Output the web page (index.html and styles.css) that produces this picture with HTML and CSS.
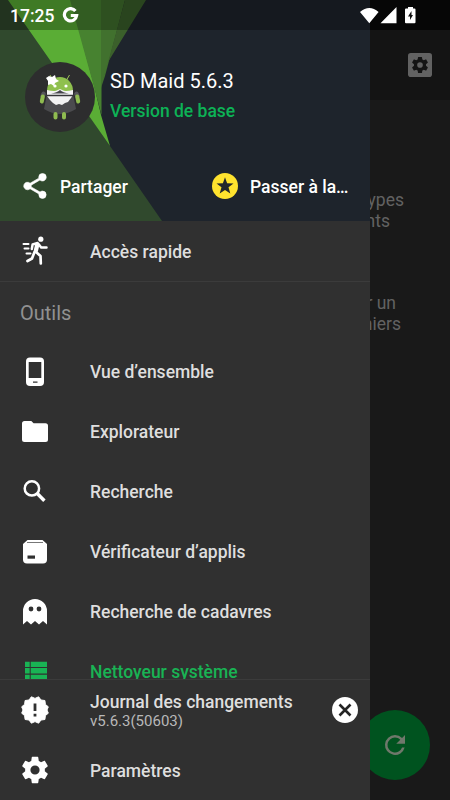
FILE: index.html
```html
<!DOCTYPE html>
<html lang="fr">
<head>
<meta charset="utf-8">
<title>SD Maid</title>
<link rel="stylesheet" href="styles.css">
</head>
<body>
<svg class="defs" width="0" height="0">
  <symbol id="gear" viewBox="0 0 24 24"><path d="M19.43 12.98c.04-.32.07-.64.07-.98s-.03-.66-.07-.98l2.11-1.65c.19-.15.24-.42.12-.64l-2-3.46c-.12-.22-.39-.3-.61-.22l-2.49 1c-.52-.4-1.08-.73-1.69-.98l-.38-2.65A.49.49 0 0 0 14 2h-4a.49.49 0 0 0-.49.42l-.38 2.65c-.61.25-1.17.59-1.69.98l-2.49-1a.49.49 0 0 0-.61.22l-2 3.46c-.13.22-.07.49.12.64l2.11 1.65c-.04.32-.07.65-.07.98s.03.66.07.98l-2.11 1.65c-.19.15-.24.42-.12.64l2 3.46c.12.22.39.3.61.22l2.49-1c.52.4 1.08.73 1.69.98l.38 2.65c.03.24.24.42.49.42h4c.25 0 .46-.18.49-.42l.38-2.65c.61-.25 1.17-.59 1.69-.98l2.49 1c.23.09.49 0 .61-.22l2-3.46c.12-.22.07-.49-.12-.64zM12 15.5a3.5 3.5 0 1 1 0-7 3.5 3.5 0 0 1 0 7z"/></symbol>
</svg>
<div class="screen">
  <main class="page">
    <div class="page-status"></div>
    <div class="toolbar">
      <svg class="toolbar-icon" viewBox="0 0 24 24"><rect width="24" height="24" rx="2.8" fill="#626262"/><use href="#gear" x="2.3" y="2.3" width="19.4" height="19.4" fill="#141414"/></svg>
    </div>
    <div class="hints">
      <p><span>types</span><span class="nts">éléments</span></p>
      <p><span class="un">sur un</span><span class="iers">fichiers</span></p>
    </div>
    <button class="fab" aria-label="Actualiser"><svg viewBox="0 0 24 24"><path fill="#6f786b" d="M17.65 6.35A7.96 7.96 0 0 0 12 4a8 8 0 1 0 7.73 10h-2.08A6 6 0 1 1 12 6c1.66 0 3.14.69 4.22 1.78L13 11h7V4z"/></svg></button>
  </main>

  <aside class="drawer">
    <header class="hero">
      <svg class="hero-art" viewBox="0 0 370 221" preserveAspectRatio="none">
        <rect width="370" height="221" fill="#1e242c"/>
        <path fill="#30492d" d="M0 0H10L110 146 162 221H0z"/>
        <path fill="#5aad35" d="M8 0H71L94 85 101 115 110 146z"/>
        <path fill="#478230" d="M70 0H101.500V115L93.500 85z"/>
        <path fill="#41712e" d="M101 0H125L105 76 101 88z"/>
        <path fill="#3b602b" d="M125 0H146L108 62 101 88z"/>
        <rect width="370" height="30" fill="#000" opacity=".29"/>
      </svg>
      <div class="identity">
        <svg class="avatar" viewBox="0 0 70 70">
          <circle cx="35" cy="35" r="35" fill="#2d2d2e"/>
          <path stroke="#9bc25a" stroke-width="1" d="M41.500 18l3-5M28 18l-3-5"/>
          <path fill="#8fc04e" d="M22 29a13 14 0 0 1 26 0v4H22z"/>
          <circle cx="30" cy="24" r="1.600" fill="#fff"/><circle cx="41" cy="24" r="1.600" fill="#fff"/>
          <path fill="#fff" d="M24 14l3 1 3-2 1 4 3 2-4 2-1 3-3-2-3 1v-4l-2-3z"/>
          <path fill="#4b4b4e" d="M22 32l26 0 3 15q-8 5-16 5t-16-5z"/>
          <path fill="#f2f2f2" d="M22 28q6 1.500 9 .8l4-1.800 4 1.800q3 .7 9-.8v5l-2 3-3 4-3 1-3 2-3-1-3 1-3-2-3-3-3-4z"/>
          <path fill="#45454a" d="M26 31.500q6-1 9-3.500 3 2.500 9 3.500z"/>
          <path stroke="#353538" stroke-width="1.500" d="M21 33.500h28"/>
          <path stroke="#55555a" stroke-width="4.600" stroke-linecap="round" d="M18.500 32l-.8 2M51.500 32l.8 2"/>
          <g stroke="#8fbb50" stroke-width="4" stroke-linecap="round"><path d="M17.800 34.500l-1 5M52.200 34.500l1 5M30.500 52v3.500M39 52v3.500"/></g>
        </svg>
        <div class="names">
          <h1>SD Maid 5.6.3</h1>
          <p>Version de base</p>
        </div>
      </div>
      <div class="actions">
        <a class="action share"><svg viewBox="0 0 24 24" fill="#fff"><path stroke="#fff" stroke-width=".5" d="M18 16.080c-.76 0-1.440.3-1.960.77L8.910 12.700c.05-.23.09-.46.09-.7s-.04-.47-.09-.7l7.050-4.110A2.990 2.990 0 0 0 21 5a3 3 0 1 0-6 0c0 .24.04.47.09.7L8.040 9.810A3 3 0 1 0 6 15c.79 0 1.500-.31 2.040-.81l7.120 4.160c-.05.21-.08.43-.08.65a2.920 2.920 0 1 0 2.920-2.920z"/></svg><span>Partager</span></a>
        <a class="action upgrade"><svg viewBox="0 0 30 30"><circle cx="15" cy="15" r="13" fill="#ffe32e"/><path fill="#22272b" d="M15 6.200l2.100 6 6.400.2-5 3.900 1.800 6.100-5.300-3.500-5.300 3.500 1.800-6.100-5-3.900 6.400-.2z"/></svg><span>Passer à la…</span></a>
      </div>
    </header>

    <nav class="menu">
      <a class="item quick"><svg viewBox="0 0 30 30"><g fill="none" stroke="#fff" stroke-linecap="round" stroke-linejoin="round"><path stroke-width="2" d="M3.500 8h5M4.500 12.500h4M6.500 17.500h4"/><path stroke-width="2.500" d="M11.800 13l.8-4.500 5-1.500"/><path stroke-width="4.300" d="M17.200 9l-1.300 5.500"/><path stroke-width="2.500" d="M18.500 8l2.700 3.600H26.500"/><path stroke-width="2.700" d="M14.500 16l-2.500 6.500-4.500 2.500M16 16l4.500 4 .3 7.500"/></g><circle cx="20.800" cy="3.200" r="2.600" fill="#fff"/></svg><span>Accès rapide</span></a>
      <h2>Outils</h2>
      <a class="item"><svg viewBox="0 0 30 30"><rect x="6" y=".4" width="18" height="28.500" rx="4" fill="#fff"/><path fill="#303030" d="M8.700 5h12.600v16H8.700zM13 24.500h4.500v1.300H13z"/></svg><span>Vue d’ensemble</span></a>
      <a class="item"><svg viewBox="0 0 30 30"><path fill="#fff" d="M4.500 4h6.800l2.300 2.300h11.900a2.500 2.500 0 0 1 2.500 2.500v13.700a2.500 2.500 0 0 1-2.500 2.500h-21A2.500 2.500 0 0 1 2 22.500v-16A2.500 2.500 0 0 1 4.500 4z"/></svg><span>Explorateur</span></a>
      <a class="item"><svg viewBox="0 0 30 30"><g fill="none" stroke="#fff"><circle cx="11.900" cy="11.400" r="7.200" stroke-width="2.500"/><path stroke-width="3.400" d="M17 16.300l7.400 7.400"/></g></svg><span>Recherche</span></a>
      <a class="item"><svg viewBox="0 0 30 30"><path fill="#fff" d="M7.500 3h15l4.500 4v15.500a4 4 0 0 1-4 4H7a4 4 0 0 1-4-4V7z"/><path fill="#777" d="M7 5h16v1H7z"/><path fill="#303030" d="M7.500 18.500h7.500v3.200h-7.500z"/></svg><span>Vérificateur d’applis</span></a>
      <a class="item"><svg viewBox="0 0 30 30"><path fill="#fff" d="M3 14a12 12 0 0 1 24 0v13.500l-4-3.500-4 3.500-4-3.500-4 3.500L7 24l-4 3.500z"/><g fill="#303030"><circle cx="11" cy="12" r="2.400"/><circle cx="19" cy="12" r="2.400"/></g></svg><span>Recherche de cadavres</span></a>
      <a class="item active"><svg viewBox="0 0 30 30" fill="#19b354"><path d="M5 4.800h4.700v5.200H5zM10.700 4.800H27v5.200H10.700zM5 11h4.700v5.500H5zM10.700 11H27v5.500H10.700zM5 17.800h4.700v5.500H5zM10.700 17.800H27v5.500H10.700z"/></svg><span>Nettoyeur système</span></a>
    </nav>

    <footer class="bottom">
      <a class="item log">
        <svg viewBox="0 0 30 30"><path fill="#fff" stroke="#fff" stroke-linejoin="round" d="M15 3.400l3.600-1.600 2.400 3.200 3.900.5.500 3.900L28.300 11.800 27 15l1.300 3.200-2.900 2.400-.5 3.900-3.900.5-2.400 3.200L15 26.600l-3.600 1.600L9 25l-3.900-.5-.5-3.900-2.900-2.400L3 15l-1.300-3.200 2.900-2.400.5-3.900L9 5l2.400-3.200z"/><path fill="#303030" d="M13.600 8.500h2.800v7.500h-2.800zM13.600 18.700h2.800v2.800h-2.800z"/></svg>
        <span class="log-text">Journal des changements<small>v5.6.3(50603)</small></span>
        <svg class="close" viewBox="0 0 30 30"><circle cx="15" cy="15" r="13" fill="#fff"/><path stroke="#242424" stroke-width="2.600" d="M9.500 9.500l11 11M20.500 9.500l-11 11"/></svg>
      </a>
      <a class="item settings"><svg viewBox="0 0 30 30"><use href="#gear" x="-.8" y="-.8" width="31.600" height="31.600" fill="#fff"/></svg><span>Paramètres</span></a>
    </footer>
  </aside>

  <div class="status">
    <span>17:25</span>
    <svg class="google" viewBox="0 0 18 18"><path fill="none" stroke="#fff" stroke-width="3.400" d="M14.200 4.200A6.500 6.500 0 1 0 15.500 9H9.300"/></svg>
    <svg class="signals" viewBox="0 0 58 20"><g fill="#fff"><path d="M1 6Q10.300-2 19.600 6L10.300 17.300zM21.500 17.300L37.500 1v16.300zM47 2.500h2V1h5v1.500h1.500q1 0 1 1v12.800q0 1-1 1h-8.500q-1 0-1-1V3.500q0-1 1-1z"/></g><path fill="#111" d="M52.500 5L49 10.500h2v3.500l3-5h-1.500z"/></svg>
  </div>
</div>
</body>
</html>
```

FILE: styles.css
```css
* { box-sizing: border-box; }
body, h1, h2, p { margin: 0; }
body { font-family: Roboto, "Noto Sans", sans-serif; }
svg { display: block; flex: none; }
.defs { position: absolute; }

.screen { position: relative; width: 450px; height: 800px; overflow: hidden; background: #191919; }

.page { height: 100%; display: flex; flex-direction: column; }
.page-status { height: 30px; background: #060606; }
.toolbar { height: 70px; background: #141414; display: flex; align-items: center; justify-content: flex-end; padding-right: 18px; }
.toolbar-icon { width: 24px; height: 24px; }
.hints { padding-top: 90px; color: #626262; font-size: 17.5px; line-height: 21px; text-align: right; }
.hints p { display: flex; flex-direction: column; padding-right: 46px; margin-bottom: 61px; }
.nts { margin-right: 14px; }
.un { margin-right: 8px; }
.iers { margin-right: 3px; }
.fab { margin: auto 20px 20px auto; width: 70px; height: 70px; border: 0; border-radius: 50%; background: #00531f; padding: 20px; }
.fab svg { width: 30px; height: 30px; }

.drawer { position: absolute; left: 0; top: 0; width: 370px; height: 800px; background: #303030; display: flex; flex-direction: column; }

.hero { position: relative; height: 221px; flex: none; }
.hero-art { position: absolute; inset: 0; width: 100%; height: 100%; }
.identity { position: relative; display: flex; padding: 61.5px 0 0 25px; gap: 15px; }
.avatar { width: 70px; height: 70px; }
.names { padding-top: 6px; }
h1 { font-weight: 400; font-size: 20px; line-height: 26px; color: #fff; }
.names p { margin-top: 5px; font-weight: 500; font-size: 17.5px; line-height: 24px; color: #0db256; }
.actions { position: relative; display: flex; padding: 40px 0 0 20px; }
.action { display: flex; align-items: center; gap: 10px; height: 30px; font-weight: 500; font-size: 17.5px; color: #fff; }
.share { width: 190px; }
.action svg { width: 30px; height: 30px; margin-top: -1px; }

.menu { flex: 1; min-height: 0; overflow: hidden; }
.item { display: flex; align-items: center; gap: 40px; height: 60px; padding: 0 10px 0 20px; font-weight: 500; font-size: 17.5px; color: #dedede; }
.item svg { width: 30px; height: 30px; }
.quick { height: 61px; padding-top: 1px; border-bottom: 1px solid #3b3b3b; }
.quick svg { margin-top: -2px; }
h2 { height: 60px; padding-left: 20px; font-weight: 400; font-size: 20px; line-height: 63px; color: #919191; }
.active { color: #19b354; }

.bottom { height: 121px; flex: none; border-top: 1px solid #3b3b3b; }
.log-text { flex: 1; line-height: 20px; padding-top: 2px; white-space: nowrap; }
.log-text small { display: block; font-weight: 400; font-size: 15px; line-height: 18px; color: #b8b8b8; }
.log .close { margin-left: -40px; }
.settings span { padding-top: 2px; }

.status { position: absolute; top: 0; left: 0; width: 450px; height: 30px; display: flex; align-items: center; padding: 1px 33px 0 10px; font-weight: 500; font-size: 17.5px; color: #fff; }
.google { width: 17px; height: 17px; margin-left: 8px; }
.signals { width: 58px; height: 20px; margin-left: auto; }
```
